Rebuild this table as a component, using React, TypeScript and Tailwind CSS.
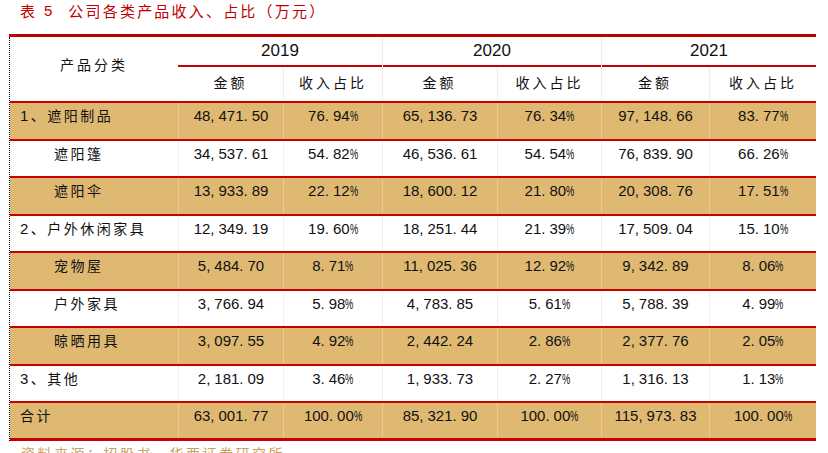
const cjk = { fontFamily: '"Noto Sans CJK SC", "Noto Sans", sans-serif' };
const latin = { fontFamily: '"Liberation Sans", Arial, "Noto Sans CJK SC", sans-serif' };

interface Fila {
  nombre: string;
  sub: boolean;
  tan: boolean;
  valores: string[];
}

const filas: Fila[] = [
  { nombre: "1、遮阳制品", sub: false, tan: true, valores: ["48,471.50", "76.94%", "65,136.73", "76.34%", "97,148.66", "83.77%"] },
  { nombre: "遮阳篷", sub: true, tan: false, valores: ["34,537.61", "54.82%", "46,536.61", "54.54%", "76,839.90", "66.26%"] },
  { nombre: "遮阳伞", sub: true, tan: true, valores: ["13,933.89", "22.12%", "18,600.12", "21.80%", "20,308.76", "17.51%"] },
  { nombre: "2、户外休闲家具", sub: false, tan: false, valores: ["12,349.19", "19.60%", "18,251.44", "21.39%", "17,509.04", "15.10%"] },
  { nombre: "宠物屋", sub: true, tan: true, valores: ["5,484.70", "8.71%", "11,025.36", "12.92%", "9,342.89", "8.06%"] },
  { nombre: "户外家具", sub: true, tan: false, valores: ["3,766.94", "5.98%", "4,783.85", "5.61%", "5,788.39", "4.99%"] },
  { nombre: "晾晒用具", sub: true, tan: true, valores: ["3,097.55", "4.92%", "2,442.24", "2.86%", "2,377.76", "2.05%"] },
  { nombre: "3、其他", sub: false, tan: false, valores: ["2,181.09", "3.46%", "1,933.73", "2.27%", "1,316.13", "1.13%"] },
  { nombre: "合计", sub: false, tan: true, valores: ["63,001.77", "100.00%", "85,321.90", "100.00%", "115,973.83", "100.00%"] },
];

const anchos = ["w-[105px]", "w-[99px]", "w-[115px]", "w-[104px]", "w-[108px]", "w-[107px]"];

// punctuation in the source font is half-width with air after it
function Numero({ texto }: { texto: string }) {
  return (
    <span style={latin}>
      {texto.split("").map((c, i) =>
        c === "," || c === "." ? (
          <span key={i} className="mr-[4px]">{c}</span>
        ) : c === "%" ? (
          <span key={i} className="inline-block scale-x-[0.62] origin-left -mr-[5px]">{c}</span>
        ) : (
          <span key={i}>{c}</span>
        )
      )}
    </span>
  );
}

export default function App() {
  return (
    <div className="w-[828px] h-[453px] bg-white overflow-hidden text-[#111]">
      <div className="h-[34px] pl-[20px] pt-[1px] text-[#C00000] text-[15px] leading-[20px] flex" style={cjk}>
        <span>表</span>
        <span className="ml-[9px]" style={latin}>5</span>
        <span className="ml-[16px] tracking-[2.2px]">公司各类产品收入、占比（万元）</span>
      </div>

      <div className="ml-[9px] w-[807px] border-t-[3px] border-[#C00000]">
        <div className="border-l border-dotted border-black">
          {/* header */}
          <div className="flex h-[66px] border-b-2 border-[#C80000]">
            <div className="w-[168px] flex items-start justify-center pt-[16px] text-[14px] tracking-[3px] leading-[22px]" style={cjk}>
              产品分类
            </div>
            {["2019", "2020", "2021"].map((y, g) => (
              <div key={y} className={`flex flex-col ${g > 0 ? "border-l border-[#EDEDED]" : ""}`}>
                <div className="h-[30px] border-b-2 border-[#C80000] flex items-center justify-center text-[17px]" style={latin}>
                  {y}
                </div>
                <div className="flex flex-1">
                  {["金额", "收入占比"].map((t, k) => (
                    <div
                      key={t}
                      className={`${anchos[g * 2 + k]} ${g > 0 && k === 0 ? "-ml-px" : ""} ${k === 1 ? "border-l border-[#EDEDED]" : ""} flex items-start justify-center pt-[4px] text-[14px] tracking-[3px] leading-[22px]`}
                      style={cjk}
                    >
                      {t}
                    </div>
                  ))}
                </div>
              </div>
            ))}
          </div>

          {/* body */}
          {filas.map((f, i) => (
            <div
              key={f.nombre}
              className={`flex h-[37.55px] ${i === filas.length - 1 ? "border-b-[3px]" : "border-b-2"} border-[#C80000] ${f.tan ? "bg-[#DFB972]" : "bg-white"}`}
            >
              <div
                className={`w-[168px] pt-[1px] text-[14px] leading-[22px] tracking-[2.5px] ${f.sub ? "pl-[44px]" : "pl-[10px]"}`}
                style={cjk}
              >
                {f.nombre.includes("、") ? (
                  <>
                    <span style={latin} className="text-[15px]">{f.nombre.split("、")[0]}</span>
                    {"、" + f.nombre.split("、")[1]}
                  </>
                ) : (
                  f.nombre
                )}
              </div>
              {f.valores.map((v, k) => (
                <div
                  key={k}
                  className={`${anchos[k]} border-l ${f.tan ? "border-[#EBCB93]" : "border-[#EFEFEF]"} pt-[1px] text-center text-[15px] leading-[22px]`}
                >
                  <Numero texto={v} />
                </div>
              ))}
            </div>
          ))}
        </div>
      </div>

      <div className="pl-[21px] pt-[2px] text-[14px] leading-[20px] tracking-[2.5px] text-[#C9A064]" style={cjk}>
        资料来源：招股书，华西证券研究所
      </div>
    </div>
  );
}
